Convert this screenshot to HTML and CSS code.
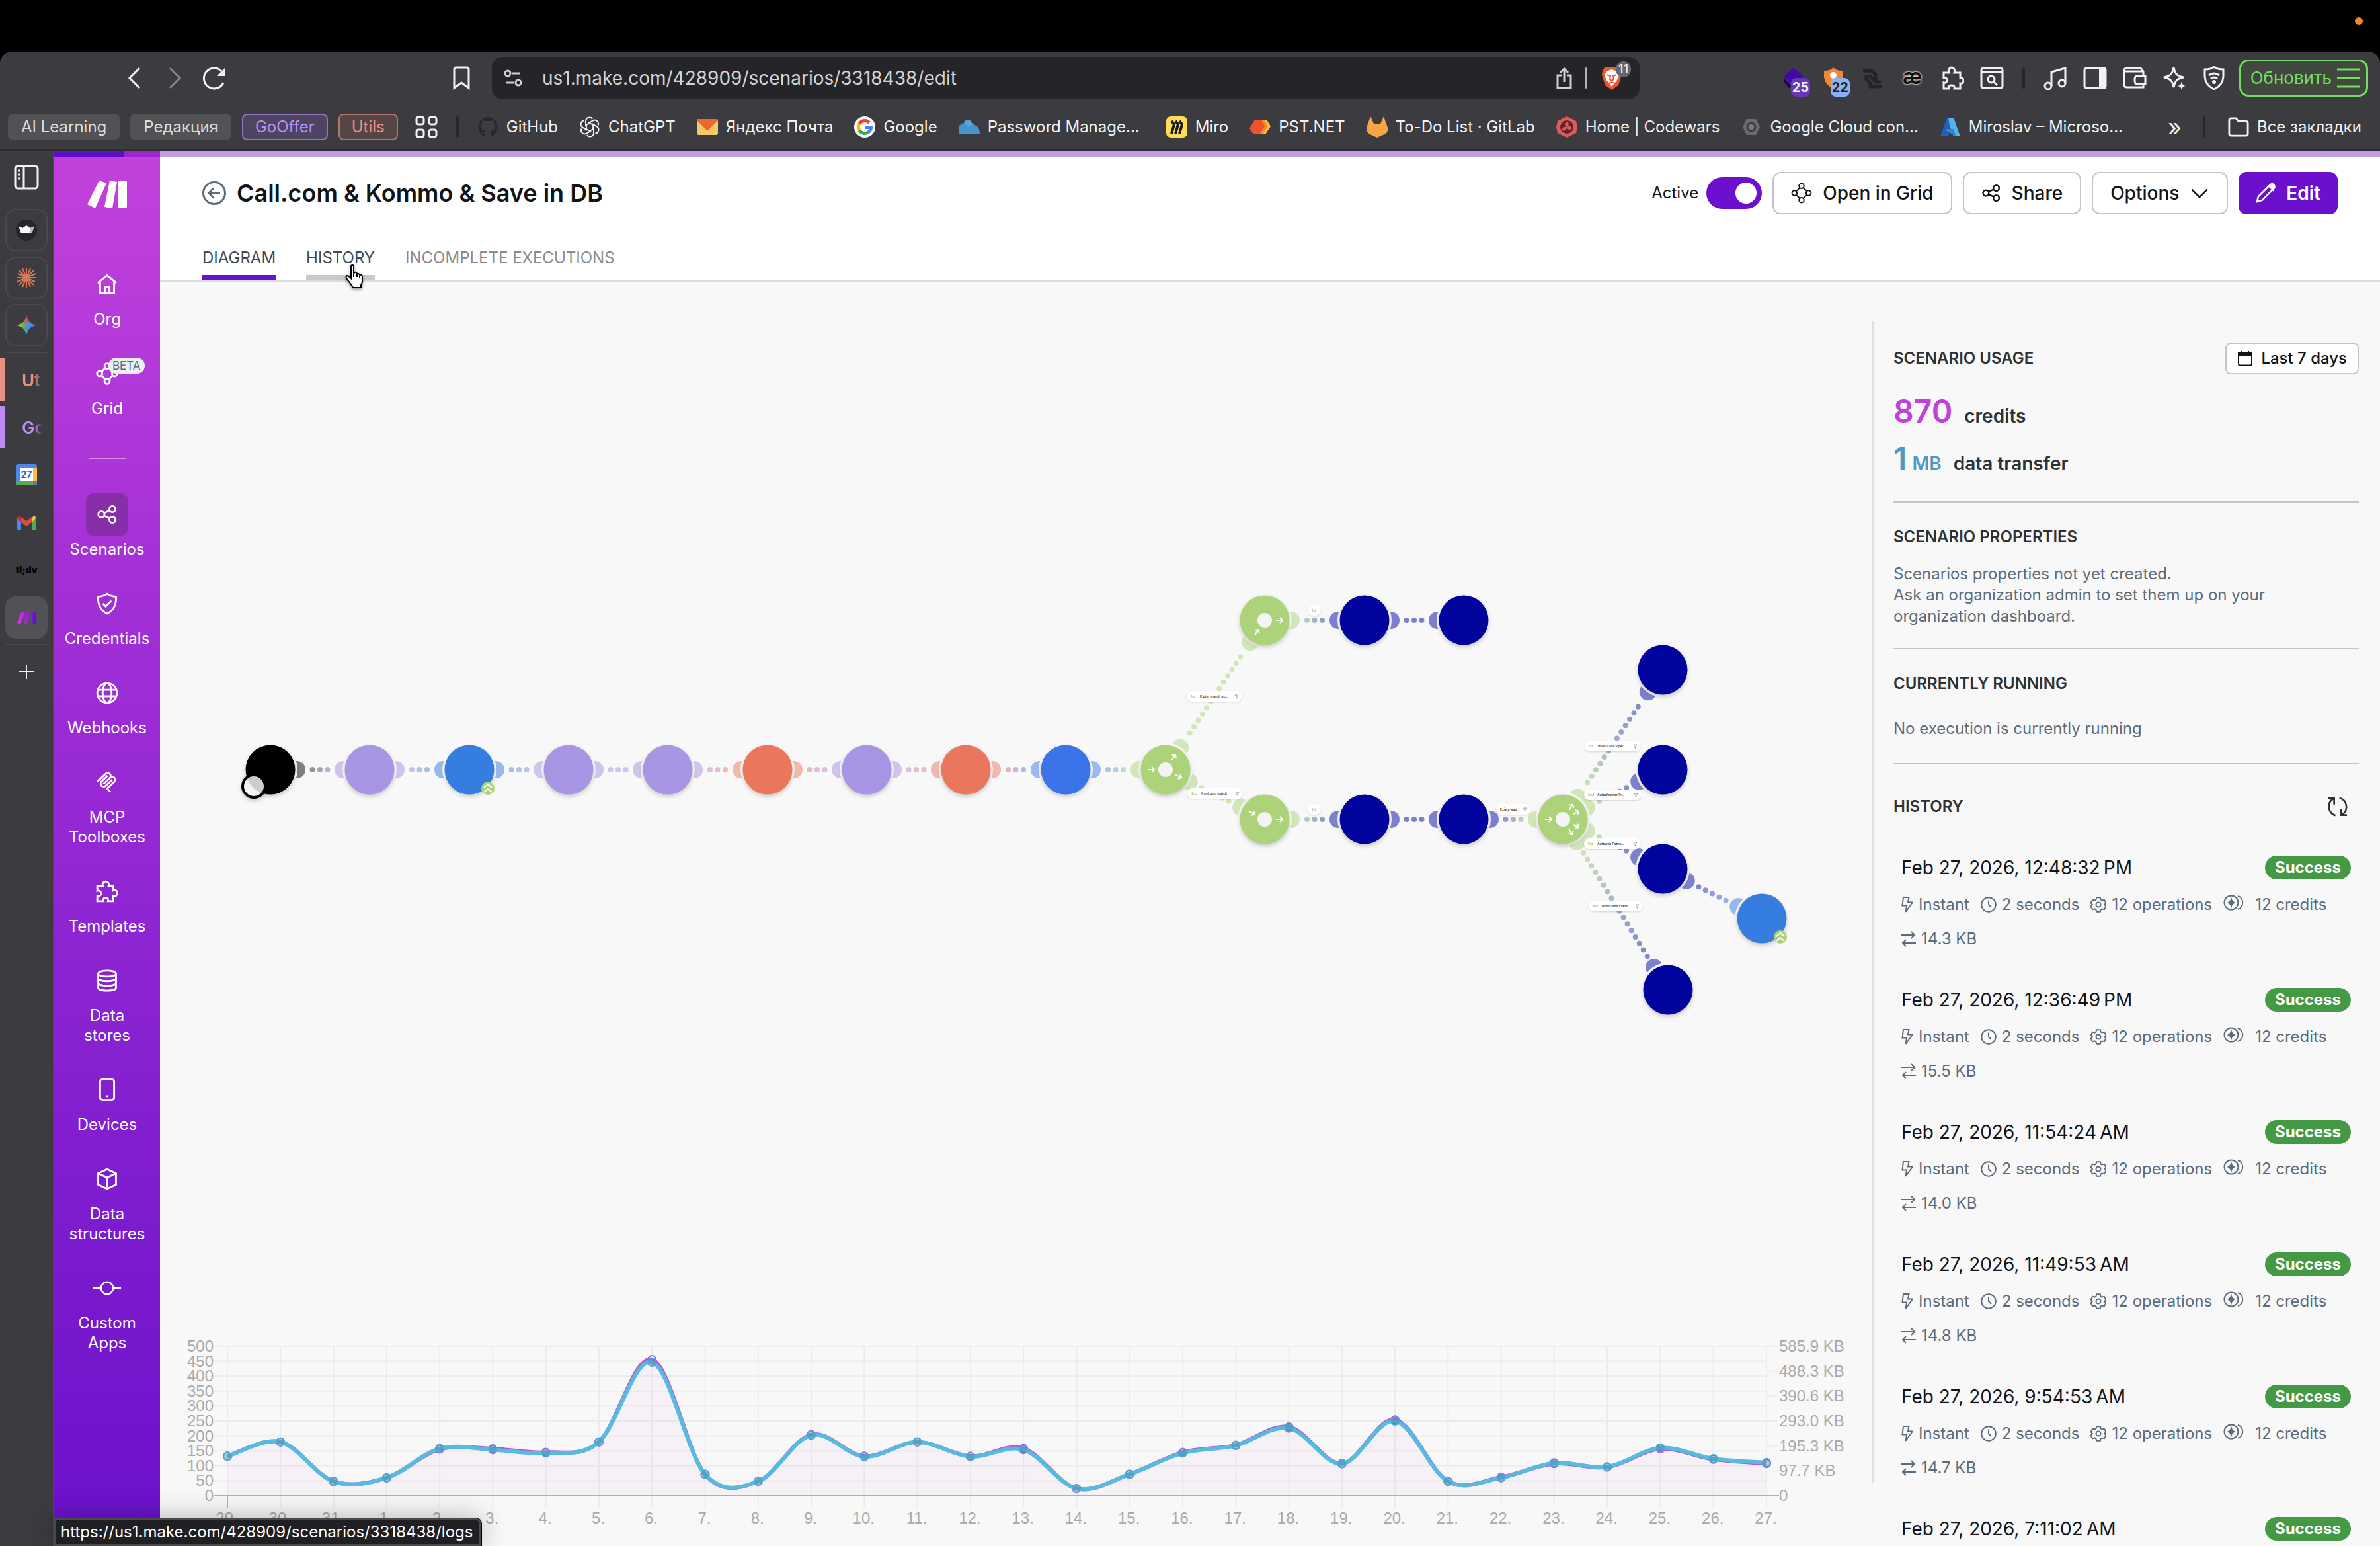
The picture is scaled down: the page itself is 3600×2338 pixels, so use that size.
FILE: index.html
```html
<!DOCTYPE html>
<html lang="en">
  <head>
    <title>Call.com &amp; Kommo &amp; Save in DB</title>
    <meta charset="UTF-8">
    <meta name="viewport" content="width=device-width">
    <link rel="stylesheet" href="styles.css">
  </head>
  <body>
    <!-- icon sprite -->
    <svg class="sprite" aria-hidden="true">
      <symbol id="i-home" viewBox="0 0 24 24"><path d="M2 10.5 12 2.5l10 8M4.5 9v12.5h15V9M9.5 21.5v-7h5v7"/></symbol>
      <symbol id="i-grid" viewBox="0 0 24 24"><circle cx="12" cy="4" r="2.8"/><circle cx="12" cy="20" r="2.8"/><circle cx="4" cy="12" r="2.8"/><circle cx="20" cy="12" r="2.8"/><path d="m6 10 4-4m4 0 4 4m0 4-4 4m-4 0-4-4"/></symbol>
      <symbol id="i-share" viewBox="0 0 24 24"><circle cx="5.5" cy="12" r="3.5"/><circle cx="18" cy="6" r="3.5"/><circle cx="18" cy="18" r="3.5"/><path d="m8.700 10.500 6.200-3m-6.200 6 6.200 3"/></symbol>
      <symbol id="i-shield" viewBox="0 0 24 24"><path d="M12 1.500c3 2 6 3 9.500 3C22 13 18.500 19.500 12 22.500 5.500 19.500 2 13 2.500 4.500c3.500 0 6.500-1 9.500-3Z"/><path d="m7.500 12 3 3L16.500 9"/></symbol>
      <symbol id="i-globe" viewBox="0 0 24 24"><circle cx="12" cy="12" r="10.500"/><ellipse cx="12" cy="12" rx="4.800" ry="10.500"/><path d="M2.500 8.500h19m-19 7h19"/></symbol>
      <symbol id="i-mcp" viewBox="0 0 24 24"><path d="m1.500 11 9.200-8.200a3.200 3.200 0 0 1 4.600 4.300L8 14m7-7a3.200 3.200 0 0 1 4.600 4.500L12 18.800l3.500 3.500M12.500 5 6 11.200a3.200 3.200 0 0 0 4.500 4.600l7-6.600"/></symbol>
      <symbol id="i-puzzle" viewBox="0 0 24 24"><path d="M1.500 6.500h6c-1-2.500.3-5 3-5s4 2.500 3 5h5V11c2.500-1 4.500.3 4.500 2.800s-2 3.900-4.500 2.900v5.800h-5.500c.8-2-.5-3.800-2.500-3.800s-3.300 1.800-2.500 3.800H1.500v-5.500c2 .7 4-.6 4-2.800s-2-3.500-4-2.700Z"/></symbol>
      <symbol id="i-db" viewBox="0 0 24 24"><ellipse cx="12" cy="4.500" rx="9.500" ry="3.200"/><path d="M2.500 4.500v15c0 4.200 19 4.200 19 0v-15M2.500 9.500c0 4 19 4 19 0m-19 5c0 4 19 4 19 0"/></symbol>
      <symbol id="i-device" viewBox="0 0 24 24"><rect x="4.500" y="1" width="15" height="22" rx="2.500"/><path d="M10.500 19h3"/></symbol>
      <symbol id="i-cube" viewBox="0 0 24 24"><path d="M12 1.500 21.500 6v12L12 22.500 2.500 18V6ZM2.500 6 12 10.500 21.500 6M12 10.500v12"/></symbol>
      <symbol id="i-node" viewBox="0 0 32 24"><circle cx="16" cy="12" r="7"/><path d="M0 12h9m14 0h9"/></symbol>
      <symbol id="i-back" viewBox="0 0 24 24"><circle cx="12" cy="12" r="11"/><path d="M18 12H6.500m5-5-5 5 5 5"/></symbol>
      <symbol id="i-chev" viewBox="0 0 24 24"><path d="m2.500 7.500 9.500 9.500 9.500-9.500"/></symbol>
      <symbol id="i-pencil" viewBox="0 0 24 24"><path d="m1.500 22.500 1.800-6.500L17.500 2a2.500 2.500 0 0 1 4.500 4.300L8 20.500Z"/><path d="m16 3.500 5 5 1.500-3.500-3.500-3.500Z" fill="currentColor"/></symbol>
      <symbol id="i-cal" viewBox="0 0 24 24"><rect x="2" y="4" width="20" height="18.500" rx="2"/><path d="M2 4h20v4H2Z" fill="currentColor"/><path d="M7 1v4m10-4v4"/></symbol>
      <symbol id="i-refresh" viewBox="0 0 24 24"><path d="M9.500 22A10.500 10.500 0 0 1 7 3M1.500 2.500H8v7M14 2a10.500 10.500 0 0 1 3 19m5.500.5H16v-7"/></symbol>
      <symbol id="i-bolt" viewBox="0 0 18 24"><path d="M3 1h8.500L10 8.500h7L6.500 23l1.700-9.500H1.500Z"/></symbol>
      <symbol id="i-clock" viewBox="0 0 24 24"><circle cx="12" cy="12" r="10.800"/><path d="M12 5.500V12l4 4"/></symbol>
      <symbol id="i-gear" viewBox="0 0 24 24"><path d="m9.200 1.200h5.600l.8 3.200 2 1.200 3.200-1 2.700 4.800-2.400 2.600 2.400 2.600-2.700 4.800-3.200-1-2 1.200-.8 3.200H9.200l-.8-3.200-2-1.200-3.200 1-2.700-4.800L2.900 12 .5 9.400l2.700-4.800 3.200 1 2-1.200Z"/><circle cx="12" cy="12" r="3.500"/></symbol>
      <symbol id="i-coin" viewBox="0 0 34 24"><circle cx="12" cy="12" r="10.500"/><path d="M22 2a10.500 10.500 0 0 1 0 20"/><path d="M12 7c.8 2.800 2 4 4 5-2 1-3.200 2.200-4 5-.8-2.800-2-4-4-5 2-1 3.200-2.200 4-5Z" fill="currentColor"/></symbol>
      <symbol id="i-swap" viewBox="0 0 22 24"><path d="M0 6h20m-5-5 5 5-5 5M22 18H2m5-5-5 5 5 5"/></symbol>
    </svg>

    <div class="menubar"><i class="rec-dot"></i></div>

    <div class="browser">
      <div class="toolbar">
        <div class="nav">
          <button class="tool" aria-label="Back"><svg viewBox="0 0 36 36"><path d="M25 3 10 18l15 15" stroke-width="3"/></svg></button>
          <button class="tool dim" aria-label="Forward"><svg viewBox="0 0 36 36"><path d="m11 3 15 15-15 15" stroke-width="3"/></svg></button>
          <button class="tool" aria-label="Reload"><svg viewBox="0 0 36 36"><path d="M32 12A15.500 15.500 0 1 0 32 25" stroke-width="3"/><path d="M35 2v13H22Z" fill="currentColor" stroke="none"/></svg></button>
          <button class="tool push" aria-label="Bookmark"><svg viewBox="0 0 36 36"><path d="M7 5q0-3 3-3h16q3 0 3 3v28l-11-8-11 8Z" stroke-width="3"/></svg></button>
        </div>
        <div class="address">
          <svg class="site" viewBox="0 0 32 32"><circle cx="8" cy="9" r="4"/><path d="M14 9h13M6 23h11"/><circle cx="24" cy="23" r="4"/></svg>
          <input class="url" type="text" aria-label="Address" value="us1.make.com/428909/scenarios/3318438/edit">
          <svg class="site" viewBox="0 0 32 32"><path d="M12 12H6v19h20V12h-6M16 22V2m-6 6 6-6 6 6"/></svg>
          <i class="pipe light"></i>
          <span class="ext">
            <svg viewBox="0 0 36 36"><path d="M8 1h20l4 6 1 6-5 16-10 7-10-7-5-16 1-6Z" fill="#f0562b" stroke="none"/><path d="m10 8 8-3 8 3 3 6-3 7-8 10-8-10-3-7Z" fill="#fff" stroke="none"/><path d="m11 13 5 2-1 5 3 2 3-2-1-5 5-2M14 26l4-2 4 2" stroke="#f0562b" stroke-width="2"/></svg>
            <b class="tag gray">11</b>
          </span>
        </div>
        <div class="tools">
          <span class="ext"><svg viewBox="0 0 36 36"><path d="m18 2 15 14-15 13L3 16Z" fill="#4209a8" stroke="none"/><path d="m3 18 12 12-3 4L3 24Z" fill="#21006e" stroke="none"/></svg><b class="tag violet">25</b></span>
          <span class="ext"><svg viewBox="0 0 36 36"><path d="M4 7q10 0 14-5 4 5 14 5v10q-2 12-14 17Q6 29 4 17Z" fill="#ee8a37" stroke="none"/><circle cx="18" cy="14" r="5" fill="#fff" stroke="none"/></svg><b class="tag blue">22</b></span>
          <span class="ext"><svg viewBox="0 0 36 36"><path d="M3 7h13l6 5v12h8M8 14v6l6 6v5h18M12 14l8 8" stroke="#242424" stroke-width="5"/></svg></span>
          <span class="ext ae">æ</span>
          <button class="tool" aria-label="Extensions"><svg viewBox="0 0 36 36"><path d="M5 10h8c-2-4 1-8 4-8s6 4 4 8h9v8c4-1 5 2 5 4s-1 5-5 4v8h-9c1-4-1-5-4-5s-5 1-4 5H5v-9c3 1 5-1 5-4s-2-4-5-3Z" stroke-width="3"/></svg></button>
          <button class="tool" aria-label="Search tabs"><svg viewBox="0 0 36 36"><rect x="2" y="3" width="32" height="30" rx="3" stroke-width="3"/><path d="M2 9h32" stroke-width="4"/><circle cx="17" cy="20" r="5" stroke-width="3"/><path d="m21 24 5 5" stroke-width="3"/></svg></button>
          <i class="pipe"></i>
          <button class="tool" aria-label="Playlist"><svg viewBox="0 0 36 36"><circle cx="7" cy="30" r="5" stroke-width="3"/><circle cx="28" cy="26" r="5" stroke-width="3"/><path d="M12 30V9l21-6v23" stroke-width="3"/></svg></button>
          <button class="tool" aria-label="Side panel"><svg viewBox="0 0 36 36"><rect x="2" y="3" width="32" height="30" rx="3" stroke-width="3"/><path d="M25 3h9v30h-9Z" fill="currentColor"/></svg></button>
          <button class="tool" aria-label="Wallet"><svg viewBox="0 0 36 36"><path d="M2 7q0-4 4-4h21l4 5v24H6q-4 0-4-4Zm0 1h29" stroke-width="3"/><path d="M34 15H21q-3 0-3 6t3 6h13Z" stroke-width="3" fill="#3c3b3f"/></svg></button>
          <button class="tool" aria-label="Leo"><svg viewBox="0 0 36 36"><path d="M17 2c2 10 5 13 15 15-10 2-13 5-15 15-2-10-5-13-15-15 10-2 13-5 15-15Z" stroke-width="3"/><path d="M29 23c1 5 2 6 6 7-4 1-5 2-6 6-1-4-2-5-6-6 4-1 5-2 6-7Z" fill="currentColor" stroke="none"/></svg></button>
          <button class="tool" aria-label="VPN"><svg viewBox="0 0 36 36"><path d="M4 5q9 0 14-4 5 4 14 4v11q-1 13-14 19Q5 29 4 16Z" stroke-width="3"/><path d="M10 14q8-6 16 0m-13 5q5-4 10 0" stroke-width="3"/><circle cx="18" cy="24" r="2" fill="currentColor"/></svg></button>
          <button class="update">Обновить<svg viewBox="0 0 34 32"><path d="M0 3h34M0 16h34M0 29h34"/></svg></button>
        </div>
      </div>

      <div class="bookmarks">
        <a class="chip" href="#">AI Learning</a>
        <a class="chip" href="#">Редакция</a>
        <a class="chip lilac" href="#">GoOffer</a>
        <a class="chip coral" href="#">Utils</a>
        <svg class="apps" viewBox="0 0 34 34"><rect x="2" y="2" width="11" height="11" rx="3"/><rect x="21" y="2" width="11" height="11" rx="3"/><rect x="2" y="21" width="11" height="11" rx="3"/><rect x="21" y="21" width="11" height="11" rx="3"/></svg>
        <i class="pipe"></i>
        <a class="bm" href="#"><svg viewBox="0 0 32 32"><path d="M16 1a15 15 0 0 0-5 29v-4c-4 1-5-2-6-3 3 0 3 3 6 1l1-2c-4-1-7-3-7-8l2-4v-4l5 1h8l5-1v4l2 4c0 5-3 7-7 8l1 3v5A15 15 0 0 0 16 1Z" fill="#24292e"/></svg>GitHub</a>
        <a class="bm" href="#"><svg class="line" viewBox="0 0 32 32"><path id="petal" d="M16 10 10 13.500V7c0-6 8-7 10-3"/><use href="#petal" transform="rotate(60 16 16)"/><use href="#petal" transform="rotate(120 16 16)"/><use href="#petal" transform="rotate(180 16 16)"/><use href="#petal" transform="rotate(240 16 16)"/><use href="#petal" transform="rotate(300 16 16)"/></svg>ChatGPT</a>
        <a class="bm" href="#"><svg viewBox="0 0 32 32"><rect y="4" width="32" height="24" rx="3" fill="#f8c766"/><path d="M2 4h28q2 0 2 2L16 22 0 6q0-2 2-2Z" fill="#f0662f"/></svg>Яндекс Почта</a>
        <a class="bm" href="#"><svg viewBox="0 0 32 32"><circle cx="16" cy="16" r="16" fill="#fff"/><g fill="none" stroke-width="5"><path d="M23 9.500A9.500 9.500 0 0 0 8 11" stroke="#ea4335"/><path d="M8 11a9.500 9.500 0 0 0 0 10" stroke="#fbbc05"/><path d="M8 21a9.500 9.500 0 0 0 14.500 2" stroke="#34a853"/><path d="M22.500 23q3-3 3-6.500H16" stroke="#4285f4"/></g></svg>Google</a>
        <a class="bm wide" href="#"><svg viewBox="0 0 32 32"><path d="M0 26V16q3-5 7-5l3-5h8l5 6 6 4q3 4 3 10Z" fill="#4795cc"/><path d="m8 8 8-2 6 6-8 4Z" fill="#5aa6da"/></svg>Password Manage...</a>
        <a class="bm" href="#"><svg viewBox="0 0 32 32"><rect width="32" height="32" rx="7" fill="#ffdd56"/><path d="m8 7 4 5-4 14M14 7l4 5-4 14M20 7l4 5-4 14" fill="none" stroke="#1c1c1e" stroke-width="4"/></svg>Miro</a>
        <a class="bm" href="#"><svg viewBox="0 0 32 32"><path d="M18 5h8l6 10-8 12h-8Z" fill="#f7c04a"/><path d="M14 5h8l6 10-8 12h-8Z" fill="#f58a35"/><path d="M8 5h10l5 10-8 12H6L0 18Z" fill="#ee5429"/></svg>PST.NET</a>
        <a class="bm" href="#"><svg viewBox="0 0 32 32"><path d="M6 0 11 11h10l5-11 6 17q1 7-5 10l-11 5L5 27q-6-4-5-10Z" fill="#f4a744"/></svg>To-Do List · GitLab</a>
        <a class="bm" href="#"><svg viewBox="0 0 32 32"><path d="m16 0 14 7 2 9-2 9-14 7-14-7-2-9 2-9Z" fill="#e2595a"/><circle cx="16" cy="16" r="10" fill="#5b2529"/><path d="M16 8q6 3 0 8 6-4 7 3-5 3-7-3 0 7-7 5-1-6 7-5-6-4 0-8Z" fill="#e2595a"/></svg>Home | Codewars</a>
        <a class="bm" href="#"><svg viewBox="0 0 32 32"><path d="M9 4h14l6 12-6 12H9L3 16Z" fill="#6c6c6e"/><circle cx="16" cy="16" r="6" fill="#777" stroke="#3c3b3f" stroke-width="3"/></svg>Google Cloud con...</a>
        <a class="bm" href="#"><svg viewBox="0 0 32 32"><path d="M11 2h10l-8 28H1Z" fill="#2161b8"/><path d="M13 2h8l10 28H21L15 14Z" fill="#51b4ec"/><path d="m10 19 11 0 4 11-15-8Z" fill="#2f86d8"/></svg>Miroslav – Microso...</a>
        <span class="more">»</span>
        <i class="pipe"></i>
        <a class="bm all" href="#"><svg class="line" viewBox="0 0 34 32"><path d="M2 5q0-3 3-3h8l4 5h12q3 0 3 3v17q0 3-3 3H5q-3 0-3-3Z" stroke-width="3"/></svg>Все закладки</a>
      </div>
    </div>

    <div class="window">
      <div class="tabstrip">
        <svg class="panel-icon" viewBox="0 0 38 38"><rect x="2" y="2" width="34" height="34" rx="4"/><path d="M15 2v34M6 9h4m-4 6h4m-4 6h4"/></svg>
        <a class="tile" href="#" aria-label="Crown"><svg viewBox="0 0 32 32"><circle cx="16" cy="16" r="16" fill="#26252d"/><path d="m4 10 6 3 6-4 6 4 6-3-4 11H8Z" fill="#fff"/><path d="m22 13 6-3-4 11h-3Z" fill="#bbb"/></svg></a>
        <a class="tile" href="#" aria-label="Claude"><svg class="burst" viewBox="0 0 32 32"><path d="M16 1v30M1 16h30M5 5l22 22M27 5 5 27M10 2l12 28M22 2 10 30M2 22l28-12M3 10l26 12"/></svg></a>
        <a class="tile" href="#" aria-label="Gemini"><svg viewBox="0 0 32 32"><defs><linearGradient id="gem" x1="0" x2="1"><stop offset="0" stop-color="#f9c22b"/><stop offset=".4" stop-color="#4fae6a"/><stop offset=".6" stop-color="#4a86f5"/><stop offset="1" stop-color="#4a86f5"/></linearGradient></defs><path d="M16 1c2 9 6 13 15 15-9 2-13 6-15 15-2-9-6-13-15-15C10 14 14 10 16 1Z" fill="url(#gem)"/><path d="M16 1c1 5 3 8 5 10l-8 1c1-3 2-6 3-11Z" fill="#e5533f"/></svg></a>
        <i class="hr"></i>
        <a class="group coral" href="#"><span>Utils</span></a>
        <a class="group lilac" href="#"><span>GoOffer</span></a>
        <a class="tile bare" href="#" aria-label="Calendar"><svg viewBox="0 0 32 32"><rect width="32" height="32" rx="3" fill="#4c86ee"/><path d="M26 6h6v20h-6Z" fill="#f7bf44"/><path d="M0 26h26v6H2q-2 0-2-2Z" fill="#58a55c"/><path d="M26 26h6l-6 6Z" fill="#e0493b"/><path d="M6 6h20v20H6Z" fill="#fff"/><text x="16" y="21" text-anchor="middle" font-size="14" font-weight="700" fill="#2c66cf">27</text></svg></a>
        <a class="tile bare" href="#" aria-label="Mail"><svg viewBox="0 0 32 32"><path d="M2 10v16q0 2 2 2h4V12Z" fill="#4c86ee"/><path d="M30 10v16q0 2-2 2h-4V12Z" fill="#58a55c"/><path d="M24 10l3-4q3 0 3 4l-6 6Z" fill="#f7bf44"/><path d="M8 8l8 6 8-6v8l-8 6-8-6Z" fill="#e0493b"/><path d="M2 10q0-4 3-4l3 2v8Z" fill="#b93224"/></svg></a>
        <a class="tile bare tldv" href="#">tl;dv</a>
        <a class="tile current" href="#" aria-label="Make"><svg viewBox="0 0 32 32"><defs><linearGradient id="mk" x1="0" x2="1"><stop offset="0" stop-color="#f32cf3"/><stop offset="1" stop-color="#5b12c9"/></linearGradient></defs><path d="m9 7 5 2-7 17-5-2ZM15 7l6 1-3 18-5-1ZM24 7h6v19h-6Z" fill="url(#mk)"/></svg></a>
        <i class="hr"></i>
        <button class="plus" aria-label="New tab"><svg viewBox="0 0 22 22"><path d="M11 0v22M0 11h22"/></svg></button>
      </div>

      <div class="page">
        <div class="progress"><i></i></div>

        <nav class="side">
          <svg class="logo" viewBox="0 0 60 42"><path d="m18 0 11 4L12 42 0 36ZM34 0l11 2-7 40-12-2ZM47 0h11q2 0 2 2v38q0 1-1 1H47Z"/></svg>
          <a href="#"><span class="ico"><svg><use href="#i-home"/></svg></span>Org</a>
          <a href="#"><span class="ico"><svg><use href="#i-grid"/></svg><em>BETA</em></span>Grid</a>
          <i class="rule"></i>
          <a class="on" href="#"><span class="ico"><svg><use href="#i-share"/></svg></span>Scenarios</a>
          <a href="#"><span class="ico"><svg><use href="#i-shield"/></svg></span>Credentials</a>
          <a href="#"><span class="ico"><svg><use href="#i-globe"/></svg></span>Webhooks</a>
          <a href="#"><span class="ico"><svg><use href="#i-mcp"/></svg></span>MCP<br>Toolboxes</a>
          <a href="#"><span class="ico"><svg><use href="#i-puzzle"/></svg></span>Templates</a>
          <a href="#"><span class="ico"><svg><use href="#i-db"/></svg></span>Data<br>stores</a>
          <a href="#"><span class="ico"><svg><use href="#i-device"/></svg></span>Devices</a>
          <a href="#"><span class="ico"><svg><use href="#i-cube"/></svg></span>Data<br>structures</a>
          <a href="#"><span class="ico"><svg class="long"><use href="#i-node"/></svg></span>Custom<br>Apps</a>
        </nav>

        <div class="content">
          <header class="head">
            <div class="row">
              <svg class="back"><use href="#i-back"/></svg>
              <h1>Call.com &amp; Kommo &amp; Save in DB</h1>
              <label for="active">Active</label>
              <input class="toggle" type="checkbox" id="active" checked>
              <button class="btn"><svg class="thin"><use href="#i-grid"/></svg>Open in Grid</button>
              <button class="btn"><svg><use href="#i-share"/></svg>Share</button>
              <button class="btn">Options<svg><use href="#i-chev"/></svg></button>
              <button class="btn primary"><svg><use href="#i-pencil"/></svg>Edit</button>
            </div>
            <div class="tabs">
              <a class="on" href="#">DIAGRAM</a>
              <a class="hover" href="#">HISTORY
                <svg class="cursor" viewBox="0 0 30 38"><path d="M10 4q0-2 2-2t2 2v11l1-2q3-1 4 2 3-1 4 2 4-1 4 3v6q0 3-2 6v4H13l-3-5-7-9q-1-3 1-4 2 0 6 4Z" fill="#fff" stroke="#000" stroke-width="2"/><path d="M14 15v5m5-4v4m4-2v3" stroke="#000" stroke-width="2"/></svg>
              </a>
              <a href="#">INCOMPLETE EXECUTIONS</a>
            </div>
          </header>

          <div class="body">
            <div class="stage">
              <svg id="diagram" viewBox="0 0 2590 1574"></svg>
              <svg id="chart" viewBox="0 0 2590 338"></svg>
            </div>

            <aside class="info">
              <section class="usage">
                <div class="bar"><h2>SCENARIO USAGE</h2><button class="btn small"><svg><use href="#i-cal"/></svg>Last 7 days</button></div>
                <p><strong class="pink">870</strong>credits</p>
                <p><strong class="sky">1 <small>MB</small></strong>data transfer</p>
              </section>
              <section class="props">
                <h2>SCENARIO PROPERTIES</h2>
                <p>Scenarios properties not yet created.<br>Ask an organization admin to set them up on your<br>organization dashboard.</p>
              </section>
              <section class="running">
                <h2>CURRENTLY RUNNING</h2>
                <p>No execution is currently running</p>
              </section>
              <section class="history">
                <div class="bar"><h2>HISTORY</h2><svg class="refresh"><use href="#i-refresh"/></svg></div>
                <ul id="runs"></ul>
              </section>
            </aside>
          </div>
        </div>
        <div class="status">https://us1.make.com/428909/scenarios/3318438/logs</div>
      </div>
    </div>
    <script src="script.js"></script>
  </body>
</html>
```
FILE: styles.css
```css
* {
  box-sizing: border-box;
}
body {
  margin: 0;
  height: 100vh;
  overflow: hidden;
  display: flex;
  flex-direction: column;
  background: #000;
  color: #111418;
  font: 24px/32px Inter, "Liberation Sans", sans-serif;
}
a {
  color: inherit;
  text-decoration: none;
}
button {
  font: inherit;
  color: inherit;
  background: none;
  border: 0;
  padding: 0;
}
svg {
  fill: none;
  stroke: currentColor;
  stroke-width: 2;
  flex: none;
}
.sprite {
  position: absolute;
  width: 0;
  height: 0;
}

/* browser chrome */
.menubar {
  height: 78px;
  flex: none;
  padding: 26px 26px 0 0;
}
.rec-dot {
  display: block;
  width: 12px;
  height: 12px;
  margin-left: auto;
  border-radius: 50%;
  background: #f08a1d;
}
.browser {
  flex: none;
  background: #3c3b3f;
  color: #f2f2f2;
  border-bottom: 2px solid #2e2d31;
  border-radius: 18px 18px 0 0;
}
.toolbar {
  height: 80px;
  display: grid;
  grid-template-columns: 744px 1fr 1120px;
  align-items: center;
}
.nav {
  display: flex;
  gap: 24px;
  padding: 0 28px 0 186px;
}
.push {
  margin-left: auto;
}
.tool, .ext {
  position: relative;
  width: 36px;
  height: 36px;
  flex: none;
}
.tool svg, .ext svg {
  display: block;
  width: 36px;
  height: 36px;
}
.dim {
  color: #88878b;
}
.address {
  height: 64px;
  display: flex;
  align-items: center;
  padding: 0 24px 0 16px;
  border-radius: 16px;
  background: #252429;
}
.site {
  width: 32px;
  height: 32px;
  stroke: #d0d0d3;
  stroke-width: 3;
}
.url {
  flex: 1;
  margin-left: 28px;
  padding: 0;
  border: 0;
  background: none;
  color: #d4d4d7;
  font: 28px/40px Inter, "Liberation Sans", sans-serif;
}
.pipe {
  width: 4px;
  height: 32px;
  margin: 0 4px;
  border-radius: 2px;
  background: #27262a;
  flex: none;
}
.pipe.light {
  width: 2px;
  margin: 0 20px 0 16px;
  background: #b4b4b8;
}
.tools {
  display: flex;
  align-items: center;
  justify-content: flex-end;
  gap: 24px;
  padding-right: 18px;
}
.tag {
  position: absolute;
  left: 14px;
  top: 18px;
  padding: 0 2px;
  border-radius: 8px;
  font-size: 20px;
  line-height: 28px;
}
.gray {
  left: 24px;
  top: -7px;
  padding: 0 4px;
  border-radius: 12px;
  background: #63656f;
  font-size: 18px;
  font-weight: 500;
  line-height: 24px;
}
.violet { background: #6638b6; }
.blue { background: #8ab0f6; color: #222; }
.ae {
  color: #111;
  font-size: 32px;
  font-weight: 700;
  text-shadow: 0 0 3px #fff, 0 0 3px #fff;
  text-align: center;
}
.update {
  display: flex;
  align-items: center;
  gap: 8px;
  height: 56px;
  padding: 0 10px 0 14px;
  margin-left: -4px;
  border: 3px solid #72dd62;
  border-radius: 14px;
  background: #41493f;
  color: #72dd62;
  font-size: 26px;
}
.update svg {
  width: 34px;
  height: 32px;
  stroke-width: 3;
}
.bookmarks {
  height: 68px;
  display: flex;
  align-items: center;
  padding: 0 28px 0 12px;
}
.chip {
  height: 40px;
  padding: 0 20px;
  margin-right: 16px;
  border-radius: 8px;
  background: #525155;
  color: #dcdcde;
  line-height: 40px;
}
.chip.lilac, .chip.coral {
  padding: 0 18px;
  border: 2px solid #9673c4;
  background: #4e4562;
  color: #bb8cf4;
  line-height: 36px;
}
.chip.coral {
  border-color: #b1756c;
  background: #554645;
  color: #e69083;
}
.apps {
  width: 34px;
  height: 34px;
  margin: 0 24px 0 10px;
  stroke-width: 3;
}
.bm {
  display: flex;
  align-items: center;
  gap: 12px;
  margin-left: 32px;
  white-space: nowrap;
}
.bookmarks .apps + .pipe + .bm {
  margin-left: 24px;
}
.bm svg {
  width: 32px;
  height: 32px;
  stroke: none;
}
.bm .line {
  stroke: #f2f2f2;
}
.wide {
  margin-right: 8px;
}
.more {
  margin: 0 28px 0 auto;
  font-size: 36px;
}
.all {
  margin-left: 30px;
}

/* vertical tab strip */
.window {
  flex: 1;
  min-height: 0;
  display: flex;
}
.tabstrip {
  width: 82px;
  flex: none;
  display: flex;
  flex-direction: column;
  align-items: center;
  gap: 8px;
  padding-top: 21px;
  background: #3c3b3f;
  border-right: 2px solid #4a494d;
  color: #f2f2f2;
}
.panel-icon {
  width: 38px;
  height: 38px;
  margin-bottom: 21px;
  stroke-width: 3;
}
.tile {
  width: 64px;
  height: 64px;
  display: grid;
  place-items: center;
  border: 2px solid #4a494d;
  border-radius: 16px;
}
.tile svg {
  width: 32px;
  height: 32px;
  stroke: none;
}
.tile .burst {
  stroke: #d97757;
}
.tile.bare { border-color: transparent; }
.tile.current { background: #525155; border-color: #525155; }
.tldv {
  color: #000;
  font-size: 14px;
  font-weight: 900;
}
.hr {
  width: 64px;
  height: 2px;
  background: #4a494d;
}
.group {
  width: 100%;
  height: 64px;
  border-left: 8px solid #e69083;
  border-radius: 0 8px 8px 0;
  padding-left: 25px;
  color: #e69083;
  font-size: 26px;
  font-weight: 600;
  line-height: 66px;
}
.group span {
  display: block;
  width: 31px;
  overflow: hidden;
  mask-image: linear-gradient(90deg, #000 60%, transparent);
}
.group.lilac { border-color: #bb8cf4; color: #bb8cf4; }
.plus svg {
  display: block;
  width: 22px;
  height: 22px;
  margin-top: 21px;
}

/* app */
.page {
  position: relative;
  flex: 1;
  min-width: 0;
  display: grid;
  grid-template-columns: 160px 1fr;
  grid-template-rows: 10px minmax(0, 1fr);
}
.progress {
  grid-column: 1 / 3;
  background: linear-gradient(90deg, #9c27cf 160px, #c09ee4 160px);
}
.progress i {
  display: block;
  width: 3%;
  height: 100%;
  background: #5c0fc4;
}
.side {
  display: flex;
  flex-direction: column;
  align-items: center;
  padding-top: 35px;
  background: linear-gradient(#c241dc, #a12fd6 33%, #6a11cb);
  color: #fff;
}
.logo {
  width: 60px;
  height: 42px;
  margin-bottom: 83px;
  fill: #fff;
  stroke: none;
}
.side a {
  margin-bottom: 35px;
  line-height: 30px;
  text-align: center;
}
.ico {
  position: relative;
  display: grid;
  place-items: center;
  width: 64px;
  height: 64px;
  margin: 0 auto 6px;
  border-radius: 12px;
}
.ico svg {
  width: 34px;
  height: 34px;
}
.ico .long {
  width: 42px;
  height: 32px;
}
.on .ico {
  background: #862fa8;
}
.on .ico svg {
  width: 32px;
  height: 32px;
}
.ico em {
  position: absolute;
  left: 34px;
  top: 8px;
  padding: 0 6px;
  border-radius: 12px;
  background: #eceff1;
  color: #5d6b7a;
  font-size: 17px;
  font-style: normal;
  line-height: 24px;
}
.rule {
  width: 56px;
  height: 2px;
  margin: 24px 0 52px;
  background: #d98aea;
}
.content {
  display: flex;
  flex-direction: column;
  min-height: 0;
  background: #f8f8f8;
}
.head {
  padding: 22px 64px 0;
  background: #fff;
  border-bottom: 2px solid #d7dde1;
}
.row {
  display: flex;
  align-items: center;
  gap: 16px;
}
.back {
  width: 36px;
  height: 36px;
  color: #5d6b7a;
}
h1 {
  flex: 1;
  margin: 0;
  font-size: 36px;
  font-weight: 600;
  line-height: 64px;
}
.toggle {
  appearance: none;
  width: 84px;
  height: 48px;
  margin: 0 0 0 -4px;
  border-radius: 24px;
  background: #6b10cc;
}
.toggle::after {
  content: "";
  display: block;
  width: 32px;
  height: 32px;
  margin: 8px 8px 8px auto;
  border-radius: 50%;
  background: #fff;
}
.btn {
  display: flex;
  align-items: center;
  gap: 16px;
  height: 64px;
  padding: 0 26px;
  border: 2px solid #bfc6cc;
  border-radius: 12px;
  background: #fff;
  font-size: 28px;
  font-weight: 500;
}
.btn svg {
  width: 30px;
  height: 30px;
}
.btn .thin {
  width: 32px;
  height: 32px;
  stroke-width: 1.5;
}
.btn.primary {
  padding: 0 24px;
  background: #6b10cc;
  border-color: #6b10cc;
  color: #fff;
  font-weight: 600;
}
.btn.small {
  gap: 12px;
  height: 48px;
  padding: 0 16px;
  border-radius: 8px;
  font-size: 24px;
}
.btn.small svg {
  width: 24px;
  height: 24px;
}
.tabs {
  display: flex;
  gap: 46px;
  margin-top: 46px;
  color: #8b8b8b;
}
.tabs a {
  position: relative;
  padding-bottom: 6px;
  border-bottom: 8px solid transparent;
  line-height: 40px;
}
.tabs .on { border-color: #6b10cc; color: #404a55; }
.tabs .hover { border-color: #c9c9c9; color: #404a55; }
.cursor {
  position: absolute;
  left: 58px;
  top: 29px;
  width: 30px;
  height: 38px;
  filter: drop-shadow(0 2px 2px rgba(0, 0, 0, .4));
}
.body {
  flex: 1;
  min-height: 0;
  display: flex;
  overflow: hidden;
}
.stage {
  flex: 1;
  min-width: 0;
  display: flex;
  flex-direction: column;
  justify-content: space-between;
}
.stage svg {
  width: 100%;
  stroke: none;
}
#chart text {
  fill: #aaa;
  font: 24px "Liberation Sans", Arial, sans-serif;
}
#diagram text {
  fill: #222;
  font-size: 5px;
  font-weight: 500;
}
#diagram .ord {
  fill: #8fbf55;
}
.disc {
  filter: drop-shadow(0 3px 3px rgba(0, 0, 0, .2));
}
.pill {
  filter: drop-shadow(0 1px 1px rgba(0, 0, 0, .15));
}

/* right column */
.info {
  width: 768px;
  flex: none;
  padding: 92px 32px 0;
  background: linear-gradient(#e0e0e0, #e0e0e0) 0 60px / 2px calc(100% - 156px) no-repeat;
}
.info section {
  border-bottom: 2px solid #bfc6cc;
}
.info h2 {
  margin: 0;
  color: #2f3235;
  font-size: 24px;
  font-weight: 600;
  line-height: 32px;
}
.info p {
  margin: 0;
  color: #5d6b7a;
}
.bar {
  display: flex;
  align-items: center;
  justify-content: space-between;
}
.info .usage {
  padding-bottom: 28px;
}
.usage .bar {
  margin-bottom: 20px;
}
.info .usage p {
  display: flex;
  align-items: baseline;
  gap: 18px;
  height: 72px;
  color: #2f3235;
  font-size: 28px;
  font-weight: 600;
}
.usage strong {
  font-size: 48px;
  font-weight: 600;
  line-height: 72px;
}
.usage small {
  margin-left: -4px;
  font-size: 28px;
  line-height: 32px;
}
.pink { color: #c241dc; }
.sky { color: #5097c1; }
.info .props {
  padding: 36px 0 32px;
}
.props h2 { margin-bottom: 24px; }
.info .running {
  padding: 36px 0;
}
.running h2 { margin-bottom: 36px; }
.info .history {
  padding-top: 48px;
  border: 0;
}
.refresh {
  width: 32px;
  height: 32px;
  margin-right: 16px;
  color: #2f3235;
}
.history ul {
  margin: 56px 0 0;
  padding: 0 12px;
  list-style: none;
}
.history li {
  height: 200px;
}
.title {
  display: flex;
  align-items: center;
  justify-content: space-between;
  margin-bottom: 20px;
  font-size: 28px;
  line-height: 40px;
}
.badge {
  padding: 0 15px;
  border-radius: 18px;
  background: #449a44;
  color: #fff;
  font-size: 24px;
  font-weight: 700;
  line-height: 36px;
}
.meta {
  display: flex;
  flex-wrap: wrap;
  gap: 20px 17px;
  color: #5d6b7a;
}
.meta span {
  display: flex;
  align-items: center;
  gap: 8px;
}
.meta svg {
  width: 24px;
  height: 24px;
}
.meta .bolt { width: 18px; }
.meta .swap { width: 22px; }
.meta .coin {
  width: 34px;
  margin: 0 6px 6px 0;
}
.status {
  position: absolute;
  left: 0;
  bottom: 0;
  height: 42px;
  padding: 0 10px 0 8px;
  border: 3px solid #4a4a4c;
  border-left-width: 2px;
  border-radius: 0 8px 0 0;
  background: #202024;
  color: #fff;
  line-height: 36px;
  box-shadow: 0 0 0 1px #000, 0 0 40px rgba(0, 0, 0, .3);
}
```
FILE: script.js
```js
// palette: [node colour, connector colour]
var C = {
  black: ['#000000', '#7f7f7f'],
  violet: ['#a895e3', '#cfc4ee'],
  blue: ['#367de0', '#98baea'],
  azure: ['#3b74ea', '#9db9f2'],
  coral: ['#ea765e', '#f1b8ab'],
  green: ['#acd27a', '#d1e6b9'],
  navy: ['#00049c', '#7d80cc']
};

// id: [x, y, colour]
var nodes = {
  a: [167, 738, 'black'], b: [317, 738, 'violet'], c: [468, 738, 'blue'],
  d: [618, 738, 'violet'], e: [768, 738, 'violet'], f: [919, 738, 'coral'],
  g: [1069, 738, 'violet'], h: [1219, 738, 'coral'], i: [1370, 738, 'azure'],
  r1: [1521, 738, 'green'], r2: [1671, 512, 'green'], j: [1822, 512, 'navy'],
  k: [1972, 512, 'navy'], r3: [1671, 813, 'green'], l: [1822, 813, 'navy'],
  m: [1972, 813, 'navy'], r4: [2122, 813, 'green'], n: [2273, 587, 'navy'],
  o: [2273, 738, 'navy'], p: [2273, 888, 'navy'], q: [2281, 1071, 'navy'],
  s: [2423, 963, 'blue']
};

// from, to, gaps between the dots
var links = [
  ['a', 'b', 2], ['b', 'c', 2], ['c', 'd', 2], ['d', 'e', 2], ['e', 'f', 2],
  ['f', 'g', 2], ['g', 'h', 2], ['h', 'i', 2], ['i', 'r1', 2],
  ['r1', 'r2', 12], ['r1', 'r3', 4], ['r2', 'j', 2], ['j', 'k', 2],
  ['r3', 'l', 2], ['l', 'm', 2], ['m', 'r4', 2],
  ['r4', 'n', 12], ['r4', 'o', 4], ['r4', 'p', 4], ['r4', 'q', 16], ['p', 's', 4]
];

// left, middle, width, ordinal, caption
var labels = [
  [1553, 627, 84, '1st', 'If utm_match ex...'],
  [1554, 774, 84, '2nd', 'If not utm_match'],
  [1736, 497, 20, '1st', ''],
  [1736, 798, 20, '1st', ''],
  [2021, 798, 52, '', 'Exists lead'],
  [2155, 702, 85, '1st', 'Book Calls Pipel...'],
  [2154, 776, 87, '2nd', 'AutoWebinar Pi...'],
  [2154, 850, 86, '3rd', 'Autoweb Febru...'],
  [2161, 944, 82, '4th', 'Bootcamp Event']
];

function circle(x, y, r, attrs) {
  return '<circle cx="' + x + '" cy="' + y + '" r="' + r + '" ' + attrs + '/>';
}

function mix(a, b, t) {
  var out = '#';
  for (var i = 1; i < 7; i += 2) {
    var v = parseInt(a.substr(i, 2), 16) * (1 - t) + parseInt(b.substr(i, 2), 16) * t;
    out += ('0' + Math.round(v).toString(16)).slice(-2);
  }
  return out;
}

function drawDiagram() {
  var ears = '', dots = '', arrows = '', discs = '', halos = '', pills = '';

  links.forEach(function (link) {
    var a = nodes[link[0]], b = nodes[link[1]], gaps = link[2];
    var dx = b[0] - a[0], dy = b[1] - a[1], len = Math.sqrt(dx * dx + dy * dy);
    var ca = C[a[2]][1], cb = C[b[2]][1];
    var ux = dx / len, uy = dy / len, deg = Math.atan2(dy, dx) * 180 / Math.PI;

    ears += circle(a[0] + ux * 40, a[1] + uy * 40, 13, 'fill="' + ca + '"');
    ears += circle(b[0] - ux * 40, b[1] - uy * 40, 13, 'fill="' + cb + '"');

    var start = (len - gaps * 11.5) / 2;
    for (var i = 0; i <= gaps; i++) {
      var d = start + i * 11.5;
      dots += circle(a[0] + ux * d, a[1] + uy * d, 4, 'fill="' + mix(ca, cb, (d - 50) / (len - 100)) + '"');
    }

    // little arrows on the routers
    [[a, 1], [b, -1]].forEach(function (end) {
      if (end[0][2] !== 'green') return;
      arrows += '<path d="M-5 0H5M1-4 5 0 1 4" stroke="#fff" stroke-width="2" transform="translate(' +
        (end[0][0] + ux * 22 * end[1]) + ' ' + (end[0][1] + uy * 22 * end[1]) + ') rotate(' + deg + ')"/>';
    });
  });

  Object.keys(nodes).forEach(function (id) {
    var n = nodes[id];
    halos += circle(n[0], n[1], 41, 'fill="#f8f8f8"');
    discs += circle(n[0], n[1], 37.5, 'class="disc" fill="' + C[n[2]][0] + '"');
    if (n[2] === 'green') discs += circle(n[0], n[1], 11, 'fill="#f4f4f4"');
    if (n[2] === 'blue') {
      discs += circle(n[0] + 28, n[1] + 28, 10, 'fill="#acd27a"');
      discs += '<path d="m' + (n[0] + 22) + ' ' + (n[1] + 27) + ' 6-5 6 5m-12 7 6-5 6 5" stroke="#fff" stroke-width="2"/>';
    }
  });
  discs += circle(142, 763, 17, 'class="disc" fill="rgba(255,255,255,.8)" stroke="#000" stroke-width="4"');

  labels.forEach(function (l) {
    var x = l[0], y = l[1], w = l[2], right = x + w, textX = x + (l[3] ? 20 : 6);
    pills += '<rect class="pill" x="' + x + '" y="' + (y - 8) + '" width="' + w + '" height="16" rx="8" fill="#fff"/>';
    if (l[3]) pills += '<text class="ord" x="' + (x + 6) + '" y="' + (y + 2) + '">' + l[3] + '</text>';
    if (l[4]) {
      pills += '<text x="' + textX + '" y="' + (y + 2) + '">' + l[4] + '</text>';
      pills += '<path d="M' + (right - 11) + ' ' + (y - 2) + 'h5l-2 3v2h-1v-2Z" stroke="#5d6b7a" stroke-width=".6"/>';
    }
  });

  document.getElementById('diagram').innerHTML = ears + halos + dots + discs + arrows + pills;
}

var days = [29, 30, 31, 1, 2, 3, 4, 5, 6, 7, 8, 9, 10, 11, 12, 13, 14, 15, 16, 17, 18, 19, 20, 21, 22, 23, 24, 25, 26, 27];
var credits = [132, 180, 48, 60, 156, 157, 145, 180, 456, 72, 48, 204, 132, 180, 132, 158, 24, 72, 145, 169, 230, 108, 254, 48, 62, 108, 96, 157, 122, 108];
var transfer = [132, 180, 48, 60, 158, 154, 143, 180, 447, 72, 48, 203, 131, 180, 131, 154, 24, 72, 143, 168, 226, 107, 250, 48, 60, 110, 97, 160, 124, 111];
var sizes = ['0', '97.7 KB', '195.3 KB', '293.0 KB', '390.6 KB', '488.3 KB', '585.9 KB'];

function smooth(points) {
  var d = 'M' + points[0];
  for (var i = 0; i < points.length - 1; i++) {
    var p0 = points[i - 1] || points[i], p1 = points[i], p2 = points[i + 1], p3 = points[i + 2] || p2;
    d += 'C' + [p1[0] + (p2[0] - p0[0]) / 6, p1[1] + (p2[1] - p0[1]) / 6,
      p2[0] - (p3[0] - p1[0]) / 6, p2[1] - (p3[1] - p1[1]) / 6, p2[0], p2[1]].join(' ');
  }
  return d;
}

function drawChart() {
  var left = 102, right = 2430, top = 36, bottom = 262, step = (right - left) / 29;
  var out = '', i, y, x;

  function place(values) {
    return values.map(function (v, n) {
      return [left + n * step, bottom - v / 500 * (bottom - top)];
    });
  }

  for (i = 0; i <= 10; i++) {
    y = bottom - i * (bottom - top) / 10;
    if (i) out += '<path d="M82 ' + y + 'H' + right + '" stroke="#ececec" stroke-width="2"/>';
    out += '<text x="81" y="' + (y + 8) + '" text-anchor="end">' + i * 50 + '</text>';
  }
  sizes.forEach(function (label, n) {
    y = bottom - n * (bottom - top) / 6;
    if (n) out += '<path d="M' + right + ' ' + y + 'h18" stroke="#ececec" stroke-width="2"/>';
    out += '<text x="2449" y="' + (y + 8) + '">' + label + '</text>';
  });
  days.forEach(function (day, n) {
    x = left + n * step;
    out += '<path d="M' + x + ' ' + top + 'V281" stroke="#ececec" stroke-width="2"/>';
    out += '<text x="' + (x - 1) + '" y="304" text-anchor="middle">' + day + '.</text>';
  });

  var a = place(credits), b = place(transfer);
  out += '<path d="' + smooth(a) + 'V' + bottom + 'H' + left + 'Z" fill="rgba(194,65,220,.04)"/>';
  out += '<path d="M82 ' + bottom + 'H2449M' + left + ' ' + bottom + 'V281" stroke="#b0b0b0" stroke-width="2"/>';
  out += '<path d="' + smooth(a) + '" stroke="#bb4fdd" stroke-width="6" fill="none"/>';
  a.forEach(function (p) {
    out += circle(p[0], p[1], 6, 'fill="none" stroke="#bb4fdd" stroke-width="2"');
  });
  out += '<path d="' + smooth(b) + '" stroke="#56bbdc" stroke-width="6" fill="none"/>';
  b.forEach(function (p) {
    out += circle(p[0], p[1], 6, 'fill="rgba(70,130,160,.4)" stroke="#4aa9d6" stroke-width="2"');
  });

  document.getElementById('chart').innerHTML = out;
}

var runs = [
  ['12:48:32\u202fPM', '14.3 KB'], ['12:36:49\u202fPM', '15.5 KB'], ['11:54:24\u202fAM', '14.0 KB'],
  ['11:49:53\u202fAM', '14.8 KB'], ['9:54:53\u202fAM', '14.7 KB'], ['7:11:02\u202fAM', '14.7 KB']
];

function icon(name, cls) {
  return '<svg class="' + (cls || '') + '"><use href="#i-' + name + '"/></svg>';
}

function drawRuns() {
  document.getElementById('runs').innerHTML = runs.map(function (run) {
    return '<li><div class="title">Feb 27, 2026, ' + run[0] + '<span class="badge">Success</span></div>' +
      '<div class="meta"><span>' + icon('bolt', 'bolt') + 'Instant</span>' +
      '<span>' + icon('clock') + '2 seconds</span>' +
      '<span>' + icon('gear') + '12 operations</span>' +
      '<span>' + icon('coin', 'coin') + '12 credits</span>' +
      '<span>' + icon('swap', 'swap') + run[1] + '</span></div></li>';
  }).join('');
}

drawDiagram();
drawChart();
drawRuns();
```
